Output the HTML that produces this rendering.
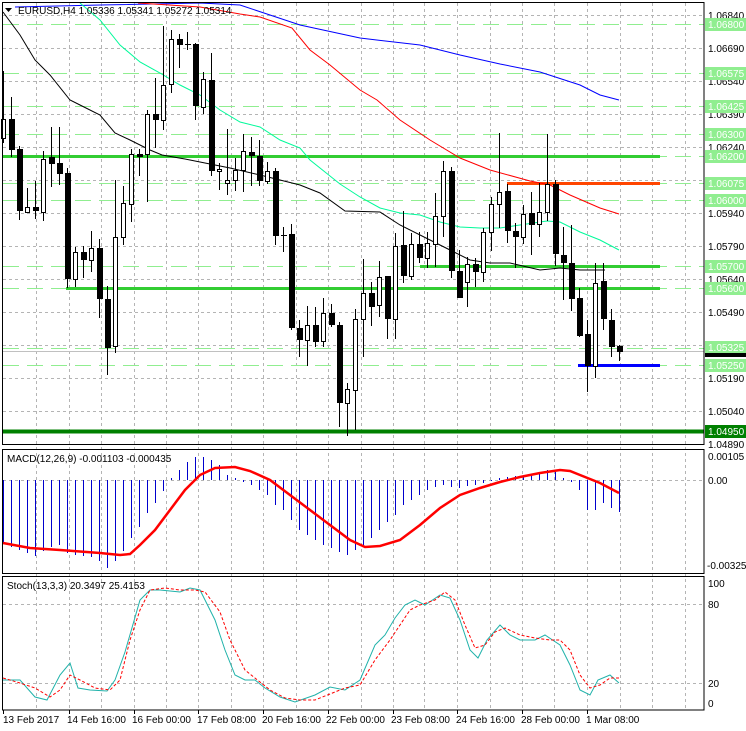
<!DOCTYPE html>
<html><head><meta charset="utf-8"><style>
html,body{margin:0;padding:0;background:#fff;}
svg{display:block;font-family:"Liberation Sans",sans-serif;font-size:10px;}
</style></head><body>
<svg width="746" height="731" viewBox="0 0 746 731" xmlns="http://www.w3.org/2000/svg">
<rect width="746" height="731" fill="#fff"/>
<g stroke="#b4b4b4" stroke-dasharray="3,3" stroke-width="1">
<path d="M36.5 3V710M69.5 3V710M101.5 3V710M134.5 3V710M166.5 3V710M198.5 3V710M231.5 3V710M263.5 3V710M296.5 3V710M328.5 3V710M361.5 3V710M393.5 3V710M424.5 3V710M457.5 3V710M490.5 3V710M522.5 3V710M554.5 3V710M587.5 3V710M620.5 3V710M652.5 3V710M685.5 3V710"/>
<path d="M3 15.5H704M3 48.5H704M3 81.5H704M3 114.5H704M3 147.5H704M3 180.5H704M3 213.5H704M3 246.5H704M3 279.5H704M3 312.5H704M3 345.5H704M3 378.5H704M3 411.5H704M3 444.5H704"/>
<path d="M3 480.5H704M3 604.5H704M3 683.5H704"/>
</g>
<g stroke="#90ee90" stroke-dasharray="16,8" stroke-width="1">
<path d="M3 24.5H704M3 73.5H704M3 106.5H704M3 134.5H704M3 156.5H704M3 183.5H704M3 200.5H704M3 266.5H704M3 288.5H704M3 348.5H704M3 365.5H704"/>
</g>
<path d="M3 351.5H704" stroke="#c0c0c0"/>
<path d="M3 156.5H660" stroke="#32cd32" stroke-width="3"/>
<path d="M420 266.5H660" stroke="#32cd32" stroke-width="3"/>
<path d="M66 288.5H660" stroke="#32cd32" stroke-width="3"/>
<path d="M507 183.5H660" stroke="#ff4500" stroke-width="3"/>
<path d="M578 365.5H660" stroke="#0000ff" stroke-width="3"/>
<path d="M3 431.5H704" stroke="#008000" stroke-width="4"/>
<g fill="none" stroke-width="1">
<polyline stroke="#0000ff" points="15,7 100,5 200,3 240,5 300,25 360,38 420,45 460,55 500,64 540,72 580,85 600,95 619,100"/>
<polyline stroke="#ff0000" points="138,3 200,7 240,14 260,17 292,28 310,50 330,65 360,90 377,100 400,120 430,140 460,158 490,170 530,181 550,185 570,195 600,208 619,214"/>
<polyline stroke="#00fa9a" points="80,3 100,20 120,45 140,62 160,73 180,85 200,95 220,110 240,122 260,127 280,140 300,148 310,160 340,184 360,197 380,208 400,213 420,215 440,222 460,227 480,228 500,228 520,225 540,222 547,221 560,222 580,232 600,240 619,250"/>
<polyline stroke="#000" points="3,12 20,35 35,60 50,75 70,100 80,105 100,115 115,133 130,140 150,150 162,155 185,159 210,164 230,168 260,175 280,180 300,185 320,193 345,211 380,212 400,225 430,240 450,250 470,260 490,263 510,263 540,270 560,268 580,270 605,270"/>
</g>
<g stroke="#000" stroke-width="1">
<path d="M3.5 71V143M11.5 97V157M19.5 146V220M27.5 188V213M35.5 181V219M43.5 151V221M51.5 127V187M59.5 127V185M67.5 168V288M75.5 247V287M83.5 246V278M91.5 231V272M99.5 239V318M107.5 286V375M115.5 180V353M123.5 186V245M131.5 149V222M139.5 149V176M147.5 110V202M155.5 78V148M163.5 26V130M171.5 30V93M179.5 34V68M187.5 32V50M195.5 43V120M203.5 72V114M211.5 53V176M219.5 163V190M227.5 129V195M235.5 158V191M243.5 134V192M251.5 137V186M259.5 140V186M267.5 162V184M275.5 168V245M283.5 227V252M291.5 224V330M299.5 320V357M307.5 306V366M315.5 307V347M323.5 298V347M331.5 304V327M339.5 322V427M347.5 383V436M355.5 309V430M363.5 259V357M371.5 282V326M379.5 261V317M387.5 276V339M395.5 233V339M403.5 211V283M411.5 233V280M419.5 232V263M427.5 232V268M435.5 193V267M443.5 161V237M451.5 167V278M459.5 250V298M467.5 257V307M475.5 258V287M483.5 228V282M491.5 197V251M499.5 133V228M507.5 184V243M515.5 223V268M523.5 205V244M531.5 192V255M539.5 183V237M547.5 134V221M555.5 180V266M563.5 227V300M571.5 225V311M579.5 288V337M587.5 320V392M595.5 263V378M603.5 263V330M611.5 309V357M619.5 345V361"/>
<g fill="#000" stroke="none">
<rect x="9" y="119" width="6" height="31"/><rect x="17" y="149" width="6" height="62"/><rect x="33" y="207" width="6" height="4"/><rect x="49" y="157" width="6" height="7"/><rect x="57" y="163" width="6" height="11"/><rect x="65" y="173" width="6" height="106"/><rect x="81" y="252" width="6" height="8"/><rect x="97" y="248" width="6" height="51"/><rect x="105" y="299" width="6" height="49"/><rect x="137" y="154" width="6" height="3"/><rect x="153" y="114" width="6" height="6"/><rect x="177" y="39" width="6" height="6"/><rect x="185" y="44" width="6" height="1"/><rect x="193" y="44" width="6" height="62"/><rect x="209" y="80" width="6" height="91"/><rect x="249" y="152" width="6" height="4"/><rect x="257" y="156" width="6" height="25"/><rect x="273" y="171" width="6" height="65"/><rect x="281" y="235" width="6" height="1"/><rect x="289" y="234" width="6" height="94"/><rect x="297" y="328" width="6" height="12"/><rect x="313" y="325" width="6" height="17"/><rect x="329" y="313" width="6" height="12"/><rect x="337" y="325" width="6" height="78"/><rect x="369" y="293" width="6" height="14"/><rect x="385" y="276" width="6" height="43"/><rect x="401" y="245" width="6" height="31"/><rect x="417" y="244" width="6" height="14"/><rect x="449" y="171" width="6" height="100"/><rect x="457" y="271" width="6" height="27"/><rect x="473" y="264" width="6" height="8"/><rect x="505" y="191" width="6" height="40"/><rect x="513" y="231" width="6" height="6"/><rect x="529" y="213" width="6" height="12"/><rect x="553" y="184" width="6" height="70"/><rect x="561" y="255" width="6" height="8"/><rect x="569" y="263" width="6" height="36"/><rect x="577" y="298" width="6" height="38"/><rect x="585" y="334" width="6" height="32"/><rect x="601" y="281" width="6" height="38"/><rect x="609" y="320" width="6" height="27"/><rect x="617" y="346" width="6" height="6"/>
</g>
<g fill="#fff">
<rect x="1.5" y="119.5" width="4" height="19"/><rect x="25.5" y="207.5" width="4" height="5"/><rect x="41.5" y="159.5" width="4" height="53"/><rect x="73.5" y="252.5" width="4" height="27"/><rect x="89.5" y="248.5" width="4" height="12"/><rect x="113.5" y="237.5" width="4" height="109"/><rect x="121.5" y="203.5" width="4" height="34"/><rect x="129.5" y="154.5" width="4" height="50"/><rect x="145.5" y="114.5" width="4" height="40"/><rect x="161.5" y="85.5" width="4" height="35"/><rect x="169.5" y="39.5" width="4" height="45"/><rect x="201.5" y="79.5" width="4" height="28"/><rect x="217.5" y="169.5" width="4" height="2"/><rect x="225.5" y="180.5" width="4" height="3"/><rect x="233.5" y="170.5" width="4" height="10"/><rect x="241.5" y="151.5" width="4" height="19"/><rect x="265.5" y="171.5" width="4" height="10"/><rect x="305.5" y="325.5" width="4" height="15"/><rect x="321.5" y="313.5" width="4" height="28"/><rect x="345.5" y="389.5" width="4" height="14"/><rect x="353.5" y="319.5" width="4" height="71"/><rect x="361.5" y="293.5" width="4" height="26"/><rect x="377.5" y="277.5" width="4" height="28"/><rect x="393.5" y="246.5" width="4" height="73"/><rect x="409.5" y="244.5" width="4" height="32"/><rect x="425.5" y="243.5" width="4" height="15"/><rect x="433.5" y="216.5" width="4" height="28"/><rect x="441.5" y="171.5" width="4" height="45"/><rect x="465.5" y="264.5" width="4" height="18"/><rect x="481.5" y="232.5" width="4" height="40"/><rect x="489.5" y="204.5" width="4" height="28"/><rect x="497.5" y="192.5" width="4" height="12"/><rect x="521.5" y="214.5" width="4" height="23"/><rect x="537.5" y="212.5" width="4" height="12"/><rect x="545.5" y="184.5" width="4" height="28"/><rect x="593.5" y="283.5" width="4" height="83"/>
</g>
</g>
<path d="M5 8H12L8.5 12Z" fill="#000"/>
<text x="18" y="14" fill="#000">EURUSD,H4  1.05336 1.05341 1.05272 1.05314</text>
<g stroke="#0000cd" stroke-width="1">
<path d="M3.5 480V543M11.5 480V547M19.5 480V550M27.5 480V553M35.5 480V556M43.5 480V551M51.5 480V547M59.5 480V545M67.5 480V553M75.5 480V555M83.5 480V556M91.5 480V557M99.5 480V561M107.5 480V568M115.5 480V561M123.5 480V551M131.5 480V538M139.5 480V527M147.5 480V513M155.5 480V503M163.5 480V491M171.5 480V478M179.5 480V470M187.5 480V462M195.5 480V457M203.5 480V457M211.5 480V460M219.5 480V465M227.5 480V475M235.5 480V478M243.5 480V482M251.5 480V485M259.5 480V490M267.5 480V495M275.5 480V505M283.5 480V510M291.5 480V520M299.5 480V530M307.5 480V535M315.5 480V540M323.5 480V545M331.5 480V548M339.5 480V552M347.5 480V555M355.5 480V550M363.5 480V545M371.5 480V538M379.5 480V530M387.5 480V522M395.5 480V515M403.5 480V505M411.5 480V500M419.5 480V495M427.5 480V490M435.5 480V487M443.5 480V485M451.5 480V487M459.5 480V488M467.5 480V486M475.5 480V485M483.5 480V483M491.5 480V481M499.5 480V478M507.5 480V477M515.5 480V476M523.5 480V476M531.5 480V475M539.5 480V472M547.5 480V470M555.5 480V472M563.5 480V478M571.5 480V482M579.5 480V490M587.5 480V510M595.5 480V510M603.5 480V503M611.5 480V508M619.5 480V512"/>
</g>
<polyline fill="none" stroke="#ff0000" stroke-width="2.5" points="3,543 30,548 60,550 100,553 120,555 130,554 140,545 155,530 170,510 185,490 200,475 215,468 235,467 250,471 270,480 290,495 310,510 330,525 350,540 365,547 380,546 400,540 420,525 440,508 460,495 480,488 500,482 520,477 540,473 560,470 570,471 580,475 600,483 619,493"/>
<polyline fill="none" stroke="#20b2aa" stroke-width="1" points="3,680 20,680 35,697 47,700 60,675 70,663 78,688 90,690 107,691 115,680 125,652 140,600 150,590 160,590 180,592 190,588 200,590 215,620 225,650 235,675 245,680 255,680 265,688 280,697 295,702 315,695 330,687 345,690 360,680 375,645 385,635 395,618 405,605 415,600 425,605 440,595 450,598 460,620 470,650 478,658 487,640 500,625 510,635 520,640 535,640 545,635 560,645 570,665 580,690 590,695 598,680 610,675 619,683"/>
<polyline fill="none" stroke="#ff0000" stroke-width="1" stroke-dasharray="3,2" points="3,678 20,683 35,688 50,697 60,690 70,675 80,680 95,688 110,690 120,680 130,640 140,610 150,590 165,588 180,590 195,590 205,592 220,612 230,640 245,670 260,682 270,690 285,698 300,700 315,700 330,694 345,688 360,685 375,660 390,640 400,625 410,610 420,605 435,600 445,592 455,600 465,625 475,648 485,645 495,632 505,628 520,635 535,638 550,640 560,640 570,650 580,675 590,688 600,685 610,678 619,678"/>
<g fill="none" stroke="#000" stroke-width="1">
<rect x="2.5" y="2.5" width="701.5" height="442"/>
<rect x="2.5" y="449.5" width="701.5" height="124"/>
<rect x="2.5" y="576.5" width="701.5" height="133.5"/>
</g>
<text x="7" y="462" fill="#000">MACD(12,26,9) -0.001103 -0.000435</text>
<text x="7" y="589" fill="#000">Stoch(13,3,3) 20.3497 25.4153</text>
<g fill="#000">
<text x="708" y="19">1.06840</text><text x="708" y="52">1.06690</text><text x="708" y="85">1.06540</text><text x="708" y="118">1.06390</text><text x="708" y="151">1.06240</text><text x="708" y="217">1.05940</text><text x="708" y="250">1.05790</text><text x="708" y="283">1.05640</text><text x="708" y="316">1.05490</text><text x="708" y="382">1.05190</text><text x="708" y="415">1.05040</text><text x="708" y="448">1.04890</text>
<text x="708" y="460">0.00105</text><text x="708" y="484">0.00</text><text x="707" y="569">-0.003259</text>
<text x="708" y="587">100</text><text x="708" y="608">80</text><text x="708" y="687">20</text><text x="708" y="707">0</text>
</g>
<rect x="705" y="352" width="41" height="5" fill="#000"/>
<g fill="#90ee90">
<rect x="705" y="18" width="41" height="13"/><rect x="705" y="67" width="41" height="13"/><rect x="705" y="100" width="41" height="13"/><rect x="705" y="128" width="41" height="13"/><rect x="705" y="150" width="41" height="13"/><rect x="705" y="177" width="41" height="13"/><rect x="705" y="194" width="41" height="13"/><rect x="705" y="260" width="41" height="13"/><rect x="705" y="282" width="41" height="13"/><rect x="705" y="341" width="41" height="12"/><rect x="705" y="359" width="41" height="13"/>
</g>
<rect x="705" y="425" width="41" height="13" fill="#008000"/>
<g fill="#fff">
<text x="708" y="28">1.06800</text><text x="708" y="77">1.06575</text><text x="708" y="110">1.06425</text><text x="708" y="138">1.06300</text><text x="708" y="160">1.06200</text><text x="708" y="187">1.06075</text><text x="708" y="204">1.06000</text><text x="708" y="270">1.05700</text><text x="708" y="292">1.05600</text><text x="708" y="351">1.05325</text><text x="708" y="369">1.05250</text><text x="708" y="435">1.04950</text>
</g>
<g stroke="#000"><path d="M3.5 710V714M69.5 710V714M134.5 710V714M198.5 710V714M263.5 710V714M328.5 710V714M393.5 710V714M457.5 710V714M522.5 710V714M587.5 710V714"/></g>
<g fill="#000">
<text x="3" y="723">13 Feb 2017</text><text x="67" y="723">14 Feb 16:00</text><text x="132" y="723">16 Feb 00:00</text><text x="197" y="723">17 Feb 08:00</text><text x="262" y="723">20 Feb 16:00</text><text x="326" y="723">22 Feb 00:00</text><text x="391" y="723">23 Feb 08:00</text><text x="456" y="723">24 Feb 16:00</text><text x="521" y="723">28 Feb 00:00</text><text x="586" y="723">1 Mar 08:00</text>
</g>
</svg>
</body></html>
